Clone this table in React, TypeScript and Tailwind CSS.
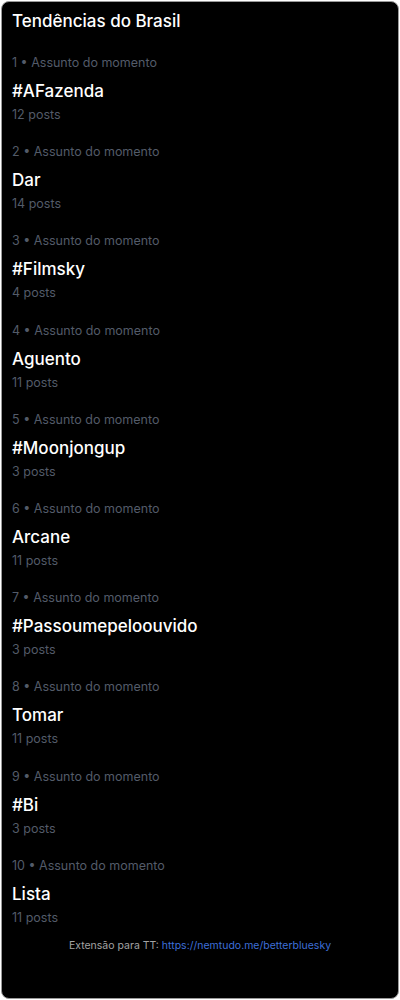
import React from 'react';

interface Trend {
  name: string;
  posts: number;
}

const trends: Trend[] = [
  { name: '#AFazenda', posts: 12 },
  { name: 'Dar', posts: 14 },
  { name: '#Filmsky', posts: 4 },
  { name: 'Aguento', posts: 11 },
  { name: '#Moonjongup', posts: 3 },
  { name: 'Arcane', posts: 11 },
  { name: '#Passoumepeloouvido', posts: 3 },
  { name: 'Tomar', posts: 11 },
  { name: '#Bi', posts: 3 },
  { name: 'Lista', posts: 11 },
];

const TrendItem: React.FC<{ trend: Trend; index: number }> = ({ trend, index }) => (
  <div className="mb-[17.2px]">
    <p className="text-[12.5px] leading-[20px] text-[#535b69]">
      {index + 1} • Assunto do momento
    </p>
    <p className="mt-[4px] text-[17px] leading-[28px] font-medium text-white">{trend.name}</p>
    <p className="text-[12.5px] leading-[20px] text-[#535b69]">{trend.posts} posts</p>
  </div>
);

export default function App() {
  return (
    <div className="w-[400px] h-[1000px] bg-white p-px" style={{ fontFamily: 'Inter, "Noto Sans", sans-serif' }}>
      <div className="h-[998px] bg-black rounded-lg border border-[#9a9a9a] px-[10px] pt-[7px]">
        <h2 className="text-[17px] leading-[24px] font-medium text-white">Tendências do Brasil</h2>
        <div className="mt-[20px]">
          {trends.map((t, i) => (
            <TrendItem key={t.name} trend={t} index={i} />
          ))}
        </div>
        <p className="-mt-[7px] text-center text-[10.5px] leading-[16px] text-[#a3a3a3]">
          Extensão para TT:{' '}
          <a href="https://nemtudo.me/betterbluesky" className="text-[#3d6fd9]">
            https://nemtudo.me/betterbluesky
          </a>
        </p>
      </div>
    </div>
  );
}
